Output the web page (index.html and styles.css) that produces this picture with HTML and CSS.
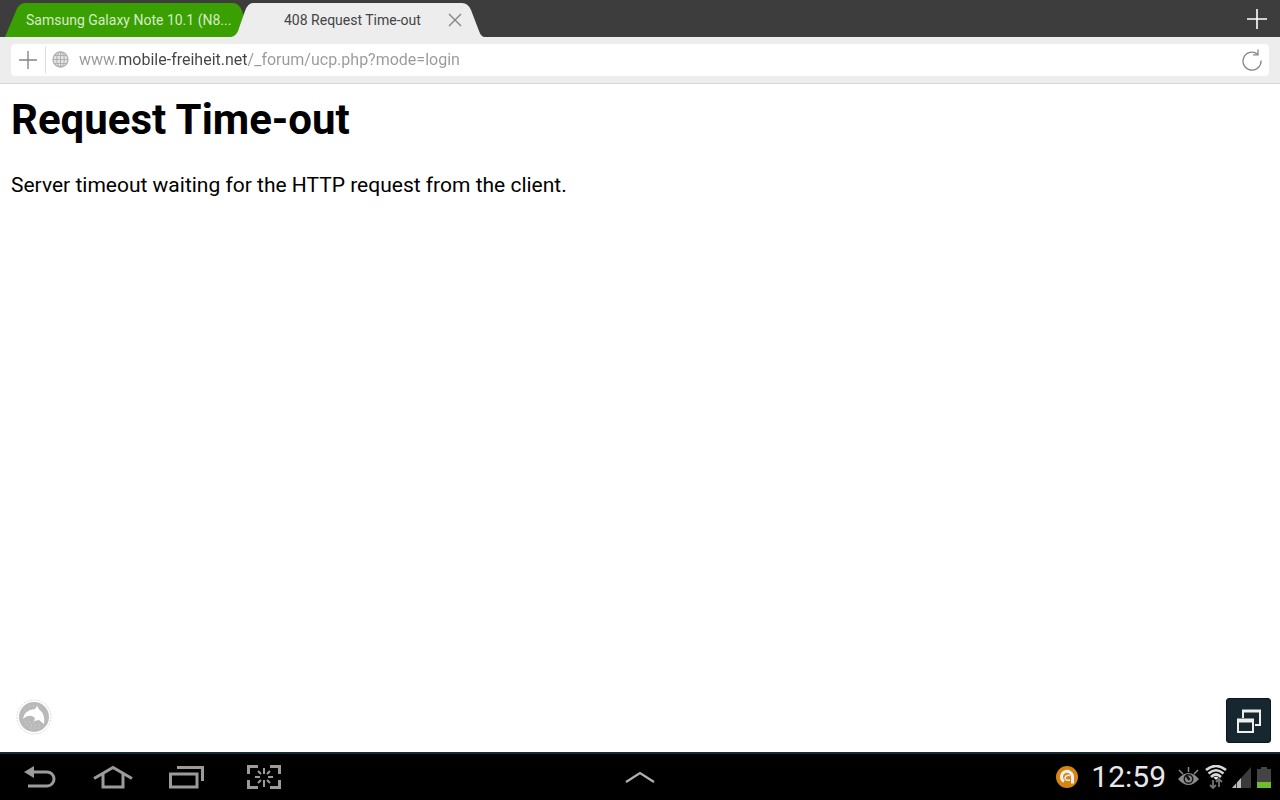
FILE: index.html
```html
<!DOCTYPE html>
<html lang="en">
<head>
<meta charset="utf-8">
<meta name="viewport" content="width=device-width, initial-scale=1">
<title>408 Request Time-out</title>
<link rel="stylesheet" href="styles.css">
</head>
<body>
<div class="screen">
  <header>
    <nav class="tabs" aria-label="Tabs">
      <div class="tab tab-back">
        <svg class="tab-shape" viewBox="0 0 240 34" preserveAspectRatio="none" aria-hidden="true"><path d="M0 34L11 8Q14 0 20 0H228Q234 0 237 8L240 16V34Z" fill="#3a9f00"/></svg>
        <button class="tab-title" type="button">Samsung Galaxy Note 10.1 (N8...</button>
      </div>
      <div class="tab tab-front">
        <svg class="tab-shape" viewBox="0 0 256 34" preserveAspectRatio="none" aria-hidden="true"><path d="M0 34Q5 33 7 28L14 8Q17 0 22 0H231Q237 0 240 7L248 28Q250 34 254 34Z" fill="#ededed"/></svg>
        <button class="tab-title" type="button">408 Request Time-out</button>
        <button class="icon-button tab-close" type="button" aria-label="Close tab">
          <svg width="14" height="14" viewBox="0 0 14 14"><path d="M1 1L13 13M13 1L1 13" stroke="#858585" stroke-width="1.4"/></svg>
        </button>
      </div>
      <button class="icon-button new-tab" type="button" aria-label="New tab">
        <svg width="20" height="20" viewBox="0 0 20 20"><path d="M10 0V20M0 10H20" stroke="#fff" stroke-width="1.6"/></svg>
      </button>
    </nav>
    <form class="toolbar">
      <div class="address-box">
        <button class="icon-button add-bookmark" type="button" aria-label="Add bookmark">
          <svg width="18" height="18" viewBox="0 0 18 18"><path d="M9 0V18M0 9H18" stroke="#858585" stroke-width="1.4"/></svg>
        </button>
        <svg class="globe" width="17" height="17" viewBox="0 0 17 17" fill="none" stroke="#b0b0b0" aria-hidden="true"><circle cx="8.500" cy="8.500" r="7.500" fill="#e4e4e4" stroke-width="1.300"/><ellipse cx="8.500" cy="8.500" rx="3.800" ry="7.500"/><path d="M8.500 1V16M1 8.500H16M2.500 4.500H14.500M2.500 12.500H14.500"/></svg>
        <input class="address" type="text" aria-label="Address" value="www.mobile-freiheit.net/_forum/ucp.php?mode=login">
        <button class="icon-button reload" type="button" aria-label="Reload">
          <svg width="20" height="22" viewBox="0 0 20 22" fill="none" stroke="#858585" stroke-width="1.3"><path d="M15.500 5A9 9 0 1 0 19 11.500"/><path d="M16 .5V5.800H11"/></svg>
        </button>
      </div>
    </form>
  </header>

  <main class="page">
    <article>
      <h1>Request Time-out</h1>
      <p>Server timeout waiting for the HTTP request from the client.</p>
    </article>
    <div class="page-tools">
      <button class="icon-button" type="button" aria-label="Dolphin menu">
        <svg width="36" height="36" viewBox="0 0 36 36"><circle cx="18" cy="18" r="17" fill="#fff" stroke="#ddd" stroke-dasharray="2 1"/><circle cx="18" cy="18" r="15" fill="#b9b9b9"/><path d="M9 11H18M11 26H26M9 23H20M14 29H23M13 7H24" stroke="#d8d8d8" stroke-dasharray="1 3"/><path d="M7 20Q8 11 19 10L21 7L23.500 11C27 13 29 18 28 25L23 21L18 22L19 19Q16 16 12 17Q9 18 7 20Z" fill="#fff"/></svg>
      </button>
      <button class="icon-button windows" type="button" aria-label="Open windows">
        <svg width="26" height="26" viewBox="0 0 26 26" fill="none" stroke="#eee"><path d="M7 10V3H24V17H19" stroke-width="2"/><path d="M6 3H25" stroke-width="3"/><path d="M2 12H17V24H2Z" fill="#17272f" stroke-width="2"/><path d="M1 12.500H18" stroke-width="4"/></svg>
      </button>
    </div>
  </main>

  <footer class="system-bar">
    <div class="nav-keys">
      <button class="icon-button" type="button" aria-label="Back">
        <svg width="34" height="24" viewBox="0 0 34 24"><path d="M9 7H24A7 7 0 0 1 24 21H5" fill="none" stroke="#9c9b9a" stroke-width="3"/><path d="M1 7L11 1V13Z" fill="#9c9b9a"/></svg>
      </button>
      <button class="icon-button" type="button" aria-label="Home">
        <svg width="40" height="24" viewBox="0 0 40 24" fill="none" stroke="#9c9b9a" stroke-width="3"><path d="M1 13.500L20 2.500L39 13.500"/><path d="M10 9V22H30V9"/></svg>
      </button>
      <button class="icon-button" type="button" aria-label="Recent apps">
        <svg width="36" height="24" viewBox="0 0 36 24" fill="none" stroke="#9c9b9a" stroke-width="3"><path d="M8 2.500H33.500V16"/><path d="M1.500 9H28V22H1.500Z"/></svg>
      </button>
      <button class="icon-button capture" type="button" aria-label="Screenshot">
        <svg width="34" height="24" viewBox="0 0 34 24" fill="none" stroke="#9c9b9a"><path d="M1.500 9V1.500H11M23 1.500H32.500V9M32.500 15V22.500H23M11 22.500H1.500V15" stroke-width="3"/><path d="M17 3V9M17 15V22M8 12H13M21 12H26M11 6L14 9M23 6L20 9M11 18L14 15M23 18L20 15" stroke-width="2"/></svg>
      </button>
    </div>
    <button class="icon-button" type="button" aria-label="Show mini apps">
      <svg width="30" height="12" viewBox="0 0 30 12"><path d="M1 11L15 2L29 11" fill="none" stroke="#b0b0ae" stroke-width="2.200"/></svg>
    </button>
    <div class="status">
      <svg width="22" height="22" viewBox="0 0 22 22" role="img" aria-label="Antivirus"><circle cx="11" cy="11" r="11" fill="#d48512"/><path d="M8 15.500A5.500 5.500 0 1 1 16.500 11V17.500" fill="none" stroke="#eee" stroke-width="3"/><path d="M14 9.500Q10 8.500 9 12Q9.500 15 14 14" fill="none" stroke="#eee" stroke-width="1.500"/></svg>
      <time class="clock" datetime="12:59">12:59</time>
      <div class="indicators">
        <svg width="23" height="22" viewBox="0 0 23 22" role="img" aria-label="Smart stay"><path d="M1 13Q11.500 1 22 13Q11.500 25 1 13Z" fill="#8c8c8c"/><circle cx="11.500" cy="13" r="5" fill="#151515"/><circle cx="11.500" cy="13" r="3.500" fill="#8c8c8c"/><path d="M9 9L12.500 14" stroke="#151515" stroke-width="2.500"/><path d="M11.500 1V6M2 4L6 8M21 4L17 8" stroke="#8c8c8c" stroke-width="1.500"/></svg>
        <svg width="22" height="24" viewBox="0 0 22 24" role="img" aria-label="Wi-Fi" fill="none"><path d="M1 5Q11-3 21 5M3.500 8.500Q11 2 18.500 8.500M6 12Q11 7 16 12" stroke="#d8d8d8" stroke-width="2.600"/><path d="M8.500 12.500Q11 11 13.500 12.500L11 15Z" fill="#eee"/><path d="M8 15V23M5 20L8 23L11 20M14 22V14M11 17L14 14L17 17" stroke="#747474" stroke-width="1.800"/></svg>
        <svg width="20" height="22" viewBox="0 0 20 22" role="img" aria-label="Mobile signal"><path d="M0 22L19 1V22Z" fill="#3b3b3b"/><path d="M0 22L4 17.600V22ZM5 22V16.500L9 12V22Z" fill="#bbb"/></svg>
        <svg width="14" height="22" viewBox="0 0 14 22" role="img" aria-label="Battery"><path d="M4 1H10V3H14V22H0V3H4Z" fill="#444"/><path d="M0 16H14V22H0Z" fill="#70bd2c"/></svg>
      </div>
    </div>
  </footer>
</div>
</body>
</html>
```
FILE: styles.css
```css
* { box-sizing: border-box; }

body {
  margin: 0;
  background: #fff;
  color: #000;
  font-family: Roboto, "Liberation Sans", sans-serif;
}

button {
  border: 0;
  padding: 0;
  background: none;
  color: inherit;
  font: inherit;
  cursor: pointer;
}

svg { display: block; }

.icon-button {
  display: grid;
  place-items: center;
  flex: none;
}

.screen {
  display: flex;
  flex-direction: column;
  min-height: 100vh;
}

.tabs {
  display: flex;
  align-items: stretch;
  height: 37px;
  padding: 3px 13px 0 5px;
  background: #3d3d3d;
}

.tab {
  position: relative;
  isolation: isolate;
  display: flex;
  align-items: center;
  padding-bottom: 1px;
  font-size: 14px;
  line-height: 20px;
}

.tab-shape {
  position: absolute;
  inset: 0;
  z-index: -1;
  width: 100%;
  height: 100%;
}

.tab-back {
  width: 240px;
  padding-left: 21px;
  color: #d5ecc8;
}

.tab-front {
  width: 256px;
  margin-left: -14px;
  padding-left: 53px;
  padding-right: 25px;
  justify-content: space-between;
  color: #444;
}

.tab-title {
  white-space: nowrap;
  text-align: left;
}

.new-tab { margin: 0 0 3px auto; }

.toolbar {
  margin: 0;
  padding: 7px 11px;
  border-bottom: 1px solid #d8d8d8;
  background: #ededed;
}

.address-box {
  display: flex;
  align-items: center;
  height: 32px;
  padding-bottom: 1px;
  border-radius: 4px;
  background: #fff;
}

.add-bookmark {
  width: 35px;
  height: 26px;
  border-right: 1px solid #ddd;
}

.globe {
  flex: none;
  margin: 0 10px 0 6px;
}

.address {
  flex: 1;
  min-width: 0;
  height: 30px;
  border: 0;
  padding: 0;
  outline: 0;
  font: 16px/24px Roboto, "Liberation Sans", sans-serif;
  color: #999;
  background: linear-gradient(to right, #999 39px, #444 39px, #444 169px, #999 169px);
  -webkit-background-clip: text;
  background-clip: text;
  -webkit-text-fill-color: transparent;
}

.reload { margin-right: 7px; }

.page {
  flex: 1;
  display: flex;
  flex-direction: column;
  justify-content: space-between;
  padding: 10px 9px 9px 11px;
}

h1 {
  margin: 0;
  font-size: 42px;
  line-height: 52px;
  font-weight: 700;
}

p {
  margin: 25px 0 0;
  font-size: 21px;
  line-height: 28px;
}

.page-tools {
  display: flex;
  justify-content: space-between;
  align-items: flex-start;
  padding-left: 5px;
}

.page-tools .icon-button { margin-top: 1px; }

.page-tools .windows {
  width: 45px;
  height: 45px;
  margin: 0;
  border: 1px solid #0b151b;
  border-radius: 3px;
  background: #17272f;
}

.system-bar {
  display: grid;
  grid-template-columns: 1fr auto 1fr;
  align-items: center;
  height: 48px;
  padding: 0 9px;
  border-top: 2px solid #182a33;
  background: #000;
}

.nav-keys {
  display: flex;
  gap: 36px;
  padding-left: 14px;
}

.capture { margin-left: 6px; }

.status {
  display: flex;
  align-items: center;
  justify-content: flex-end;
}

.clock {
  margin: 0 11px 0 13px;
  color: #e8e8e8;
  font-size: 30px;
  line-height: 36px;
}

.indicators {
  display: flex;
  align-items: center;
  gap: 5px;
}
```
